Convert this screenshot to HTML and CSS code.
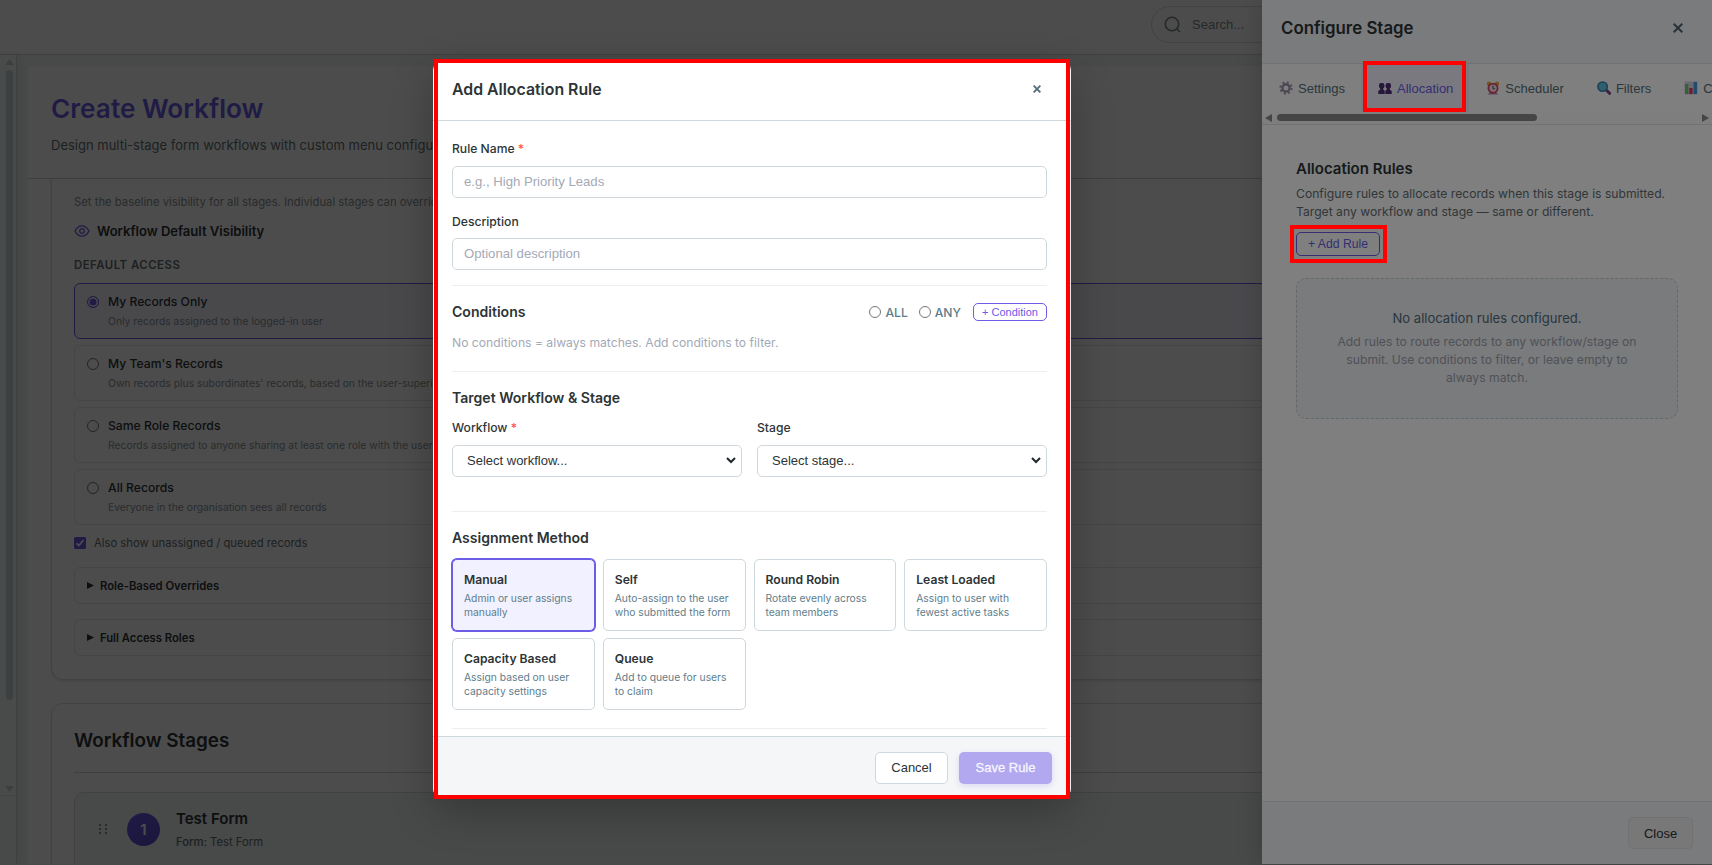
FILE: index.html
```
<!DOCTYPE html>
<html lang="en">
<head>
  <meta charset="UTF-8" />
  <meta name="viewport" content="width=device-width, initial-scale=1.0"/>
  <title>Create Workflow</title>
  <link rel="stylesheet" href="styles.css">
</head>
<body>
  <div class="app">
    <header class="topbar">
      <div class="search">
        <svg width="18" height="18" viewBox="0 0 18 18" fill="none" stroke="#7d888c" stroke-width="1.6"><circle cx="8" cy="8" r="6.7"/><path d="M13 13l3 3"/></svg>
        <span>Search...</span>
      </div>
    </header>
    <div class="shell">
      <aside class="sidebar">
        <div class="side-scroll">
          <i class="arrow-up"></i>
          <div class="side-thumb"></div>
          <i class="arrow-down"></i>
        </div>
        <div class="side-foot"></div>
      </aside>
      <main class="content">
        <div class="page-head">
          <h1>Create Workflow</h1>
          <p>Design multi-stage form workflows with custom menu configurations</p>
        </div>
        <div class="page-body">
          <section class="card visibility">
            <p class="hint">Set the baseline visibility for all stages. Individual stages can override this setting.</p>
            <h3>
              <svg width="16" height="14" viewBox="0 0 16 14" fill="none" stroke="#6c5ce7" stroke-width="1.3"><path d="M1 7C2.6 3.700 5 1.800 8 1.800S13.400 3.700 15 7C13.400 10.300 11 12.200 8 12.200S2.600 10.300 1 7z"/><circle cx="8" cy="7" r="2.300"/></svg>
              Workflow Default Visibility
            </h3>
            <h4>DEFAULT ACCESS</h4>
            <div class="options">
              <div class="option selected"><i class="radio on"></i><div><b>My Records Only</b><span>Only records assigned to the logged-in user</span></div></div>
              <div class="option"><i class="radio"></i><div><b>My Team's Records</b><span>Own records plus subordinates' records, based on the user-superior mapping</span></div></div>
              <div class="option"><i class="radio"></i><div><b>Same Role Records</b><span>Records assigned to anyone sharing at least one role with the user</span></div></div>
              <div class="option"><i class="radio"></i><div><b>All Records</b><span>Everyone in the organisation sees all records</span></div></div>
            </div>
            <div class="check-row">
              <svg width="12" height="12" viewBox="0 0 12 12"><rect width="12" height="12" rx="1.500" fill="#6c5ce7"/><path d="M2.500 6.300l2.400 2.300 4.600-5.600" fill="none" stroke="#fff" stroke-width="1.700"/></svg>
              Also show unassigned / queued records
            </div>
            <div class="fold"><i></i>Role-Based Overrides</div>
            <div class="fold"><i></i>Full Access Roles</div>
          </section>
          <section class="card stages">
            <h2>Workflow Stages</h2>
            <div class="stage">
              <svg class="grip" width="9" height="11" viewBox="0 0 9 11" fill="#8a9599"><path d="M0 0h2v2H0zM6 0h2v2H6zM0 4h2v2H0zM6 4h2v2H6zM0 8h2v2H0zM6 8h2v2H6z"/></svg>
              <div class="num">1</div>
              <div class="stage-text"><b>Test Form</b><span><em>Form:</em> Test Form</span></div>
            </div>
          </section>
        </div>
      </main>
    </div>
  </div>
  <div class="shade shade-page"></div>

  <div class="drawer">
    <div class="drawer-head">
      <h2>Configure Stage</h2>
      <svg width="10" height="10" viewBox="0 0 10 10" stroke="#4f6470" stroke-width="2"><path d="M.7.700l8.600 8.600M9.300.7L.7 9.300"/></svg>
    </div>
    <div class="tabs">
      <div class="tab">
        <svg width="14" height="14" viewBox="0 0 14 14"><circle cx="7" cy="7" r="5.600" fill="none" stroke="#a79bb5" stroke-width="2.200" stroke-dasharray="2.200"/><circle cx="7" cy="7" r="3.600" fill="none" stroke="#94879f" stroke-width="2.200"/></svg>
        Settings
      </div>
      <div class="tab active">
        <svg width="14" height="12" viewBox="0 0 14 12" fill="#4d2f77"><rect x="1" y="1" width="5.400" height="5.400" rx="2"/><rect x="7.600" y="1" width="5.400" height="5.400" rx="2"/><path d="M2.200 5h3v2.500l1.500 1.300V12H.3V9l1.900-1.500zM8.800 5h3v2.500L13.700 9v3H7.300V8.800l1.500-1.300z"/></svg>
        Allocation
      </div>
      <div class="tab">
        <svg width="14" height="14" viewBox="0 0 14 14"><path d="M2 13.500l2-3h6l2 3z" fill="#b391b5"/><circle cx="3" cy="2.800" r="2.200" fill="#e8a83c"/><circle cx="11" cy="2.800" r="2.200" fill="#e8a83c"/><circle cx="7" cy="7.200" r="4.600" fill="#ece0ec" stroke="#d8415c" stroke-width="1.800"/><path d="M7 4.500v3.200h1.800" fill="none" stroke="#514061" stroke-width="1"/></svg>
        Scheduler
      </div>
      <div class="tab">
        <svg width="14" height="14" viewBox="0 0 14 14"><path d="M8.700 8.500l4 3.800" stroke="#7b4384" stroke-width="3" stroke-linecap="round"/><circle cx="5.600" cy="5.600" r="4.700" fill="#5fc1dc" stroke="#347fa8" stroke-width="1.500"/></svg>
        Filters
      </div>
      <div class="tab">
        <svg width="14" height="14" viewBox="0 0 14 14"><rect x=".5" y=".5" width="13" height="13" fill="#d9d2e2"/><path d="M1 3h3.300v10H1z" fill="#70c06c"/><path d="M5.300 7h3.300v6H5.300z" fill="#d63a62"/><path d="M9.600 1H13v12H9.600z" fill="#3b9ad4"/></svg>
        Conditions
      </div>
    </div>
    <div class="tab-scroll"><i class="arrow-left"></i><div class="tab-thumb"></div><i class="arrow-right"></i></div>
    <div class="drawer-body">
      <h3>Allocation Rules</h3>
      <p>Configure rules to allocate records when this stage is submitted.<br>Target any workflow and stage — same or different.</p>
      <button class="outline-btn add-rule">+ Add Rule</button>
      <div class="empty">
        <b>No allocation rules configured.</b>
        <span>Add rules to route records to any workflow/stage on submit. Use conditions to filter, or leave empty to always match.</span>
      </div>
    </div>
    <div class="drawer-foot"><button class="close-btn">Close</button></div>
  </div>
  <div class="shade shade-drawer"></div>

  <div class="modal">
    <div class="modal-head">
      <h2>Add Allocation Rule</h2>
      <svg width="8" height="8" viewBox="0 0 8 8" stroke="#546e7a" stroke-width="1.900"><path d="M.6.600l6.800 6.800M7.400.6L.6 7.400"/></svg>
    </div>
    <div class="modal-body">
      <label>Rule Name <i>*</i></label>
      <input type="text" placeholder="e.g., High Priority Leads">
      <label class="next">Description</label>
      <input type="text" placeholder="Optional description">
      <section class="conditions">
        <div class="cond-head">
          <h3>Conditions</h3>
          <div class="match"><i class="radio"></i>ALL<i class="radio any"></i>ANY<button class="outline-btn cond-btn">+ Condition</button></div>
        </div>
        <p>No conditions = always matches. Add conditions to filter.</p>
      </section>
      <section class="target">
        <h3>Target Workflow &amp; Stage</h3>
        <div class="target-grid">
          <div>
            <label>Workflow <i>*</i></label>
            <div class="select">Select workflow...<svg width="10" height="7" viewBox="0 0 10 7" fill="none" stroke="#20282b" stroke-width="2"><path d="M1 1l4 4 4-4"/></svg></div>
          </div>
          <div>
            <label>Stage</label>
            <div class="select">Select stage...<svg width="10" height="7" viewBox="0 0 10 7" fill="none" stroke="#20282b" stroke-width="2"><path d="M1 1l4 4 4-4"/></svg></div>
          </div>
        </div>
      </section>
      <section class="assign">
        <h3>Assignment Method</h3>
        <div class="methods">
          <div class="method picked"><b>Manual</b><span>Admin or user assigns manually</span></div>
          <div class="method"><b>Self</b><span>Auto-assign to the user who submitted the form</span></div>
          <div class="method"><b>Round Robin</b><span>Rotate evenly across team members</span></div>
          <div class="method"><b>Least Loaded</b><span>Assign to user with fewest active tasks</span></div>
          <div class="method"><b>Capacity Based</b><span>Assign based on user capacity settings</span></div>
          <div class="method"><b>Queue</b><span>Add to queue for users to claim</span></div>
        </div>
      </section>
      <section></section>
    </div>
    <div class="modal-foot">
      <button class="cancel">Cancel</button>
      <button class="save">Save Rule</button>
    </div>
  </div>

  <div class="mark mark-modal"></div>
  <div class="mark mark-tab"></div>
  <div class="mark mark-add"></div>
</body>
</html>
```
FILE: styles.css
```
* {
  margin: 0;
  padding: 0;
  box-sizing: border-box;
}
body {
  width: 1712px;
  height: 865px;
  overflow: hidden;
  position: relative;
  font-family: Inter, sans-serif;
  color: #2d3436;
  background: #f0f4f4;
}
button, input, .select, .search, .tab {
  font-family: "Liberation Sans", sans-serif;
  font-size: 13px;
}
i, em {
  font-style: normal;
}
.app {
  height: 864px;
  display: flex;
  flex-direction: column;
  overflow: hidden;
}
.topbar {
  height: 55px;
  flex: none;
  background: #fff;
  border-bottom: 1px solid #d0dadb;
  padding: 6px 0 0 1151px;
}
.search {
  width: 300px;
  height: 37px;
  border: 1px solid #d5dddf;
  border-radius: 19px;
  padding-left: 12px;
  display: flex;
  align-items: center;
  gap: 10px;
  color: #7f8a8e;
}
.shell {
  flex: 1;
  min-height: 0;
  display: flex;
}
.sidebar {
  width: 17px;
  flex: none;
  background: #f6f8f8;
  border-right: 1px solid #cfd8da;
  box-shadow: 2px 0 8px rgba(0, 0, 0, .08);
  display: flex;
  flex-direction: column;
}
.side-scroll {
  height: 740px;
  padding: 4px 0 0 5px;
  display: flex;
  flex-direction: column;
}
.side-thumb {
  width: 7px;
  height: 630px;
  margin: 5px 0 0 1px;
  border-radius: 4px;
  background: #ccd6d9;
}
.arrow-up, .arrow-down {
  width: 9px;
  height: 6px;
  background: #c8d2d5;
  clip-path: polygon(50% 0, 100% 100%, 0 100%);
}
.arrow-down {
  margin-top: 86px;
  transform: rotate(180deg);
}
.side-foot {
  flex: 1;
  background: #f0f4f4;
  border-top: 1px solid #dfe6e9;
}
.content {
  flex: 1;
  padding: 11px 0 0 11px;
  display: flex;
  flex-direction: column;
}
.page-head {
  height: 113px;
  flex: none;
  background: #fff;
  border-bottom: 1px solid #cbd5d8;
  padding: 26px 23px 0;
}
.page-head h1 {
  font-size: 26.200px;
  line-height: 34px;
  font-weight: 600;
  color: #6c5ce7;
}
.page-head p {
  margin-top: 8px;
  font-size: 13px;
  line-height: 22px;
  color: #636e72;
}
.page-body {
  flex: 1;
  background: #fff;
  padding: 0 23px;
}
.card {
  border: 1px solid #d9dee0;
  border-radius: 12px;
  padding: 0 22px;
  box-shadow: 0 1px 3px rgba(0, 0, 0, .12);
}
.visibility {
  height: 501px;
  border-top: none;
  border-radius: 0 0 12px 12px;
  padding-top: 14px;
}
.hint {
  font-size: 11.300px;
  line-height: 18px;
  color: #8b9296;
}
.visibility h3 {
  margin-top: 10px;
  display: flex;
  align-items: center;
  gap: 7px;
  font-size: 13.050px;
  line-height: 20px;
  font-weight: 600;
}
.visibility h4 {
  margin-top: 16px;
  font-size: 11.400px;
  line-height: 16px;
  font-weight: 600;
  letter-spacing: .5px;
  color: #636e72;
}
.options {
  margin-top: 10px;
  display: flex;
  flex-direction: column;
  gap: 6px;
}
.option {
  height: 56px;
  border: 1px solid #e4e7e9;
  border-radius: 6px;
  padding: 9px 12px;
  display: flex;
  gap: 9px;
}
.option.selected {
  border-color: #6c5ce7;
  background: #f5f4ff;
}
.option b {
  display: block;
  font-size: 12.200px;
  line-height: 18px;
  font-weight: 500;
}
.option span {
  display: block;
  margin-top: 2px;
  font-size: 10.350px;
  line-height: 16px;
  color: #8b9499;
}
.radio {
  width: 12px;
  height: 12px;
  flex: none;
  border: 1px solid #767676;
  border-radius: 50%;
  background: #fff;
}
.option .radio {
  margin-top: 3px;
}
.radio.on {
  border: 1px solid #6c5ce7;
  background: #6c5ce7;
  box-shadow: inset 0 0 0 1.500px #fff;
}
.check-row {
  margin-top: 9px;
  height: 18px;
  display: flex;
  align-items: center;
  gap: 8px;
  font-size: 11.250px;
  color: #636e72;
}
.fold {
  height: 37px;
  margin-top: 15px;
  border: 1px solid #e4e7e9;
  border-radius: 6px;
  padding-left: 12px;
  display: flex;
  align-items: center;
  gap: 6px;
  font-size: 11.250px;
  font-weight: 600;
}
.fold i {
  width: 7px;
  height: 7px;
  background: #2d3436;
  clip-path: polygon(0 0, 100% 50%, 0 100%);
}
.stages {
  height: 220px;
  margin-top: 23px;
}
.stages h2 {
  height: 69px;
  border-bottom: 1px solid #cbd5d8;
  padding-top: 24px;
  font-size: 18.850px;
  line-height: 26px;
  font-weight: 600;
}
.stage {
  height: 110px;
  margin-top: 19px;
  border: 1px solid #d5dcde;
  border-radius: 10px;
  background: #f1f5f3;
  display: flex;
  padding: 16px 24px;
}
.grip {
  margin-top: 15px;
}
.num {
  width: 33px;
  height: 33px;
  margin: 4px 16px 0 19px;
  border-radius: 50%;
  background: linear-gradient(135deg, #6c5ce7, #5548c8);
  color: #fff;
  font-size: 15px;
  line-height: 33px;
  font-weight: 600;
  text-align: center;
}
.stage-text b {
  display: block;
  font-size: 15px;
  line-height: 20px;
  font-weight: 600;
}
.stage-text span {
  display: block;
  margin-top: 4px;
  font-size: 11.250px;
  line-height: 18px;
  color: #636e72;
}
.stage-text em {
  font-weight: 500;
}

/* overlays */
.shade {
  position: absolute;
  inset: 0;
}
.shade-page {
  background: rgba(0, 0, 0, .4);
}
.shade-drawer {
  background: rgba(0, 0, 0, .5);
}

/* drawer */
.drawer {
  position: absolute;
  top: 0;
  right: 0;
  width: 450px;
  height: 864px;
  background: #fff;
  display: flex;
  flex-direction: column;
  box-shadow: -4px 0 20px rgba(0, 0, 0, .15);
}
.drawer-head {
  height: 64px;
  flex: none;
  padding: 0 29px 8px 19px;
  background: #f5f6fa;
  border-bottom: 1px solid #dfe6e9;
  display: flex;
  align-items: center;
  justify-content: space-between;
}
.drawer-head h2 {
  font-size: 16.850px;
  font-weight: 600;
}
.tabs {
  height: 48px;
  flex: none;
  display: flex;
  overflow: hidden;
}
.tab {
  flex: none;
  display: flex;
  align-items: center;
  gap: 5px;
  padding: 0 16px 0 17px;
  color: #546e7a;
}
.tab.active {
  background: #f5f3ff;
  color: #6c5ce7;
}
.tab-scroll {
  height: 13px;
  flex: none;
  border-bottom: 1px solid #dfe6e9;
  background: #fcfcfc;
  display: flex;
  align-items: flex-start;
  padding: 2px 3px 0;
}
.tab-thumb {
  width: 260px;
  height: 7px;
  margin: 0 165px 0 5px;
  border-radius: 4px;
  background: #8b8b8b;
}
.arrow-left, .arrow-right {
  width: 7px;
  height: 8px;
  background: #8b8b8b;
  clip-path: polygon(0 50%, 100% 0, 100% 100%);
}
.arrow-right {
  transform: rotate(180deg);
}
.drawer-body {
  flex: 1;
  padding: 34px;
}
.drawer-body h3 {
  font-size: 15px;
  line-height: 20px;
  font-weight: 600;
}
.drawer-body p {
  margin-top: 6px;
  font-size: 12.170px;
  line-height: 18px;
  color: #636e72;
  white-space: nowrap;
}
.outline-btn {
  border: 1px solid #6c5ce7;
  border-radius: 5px;
  background: #fff;
  color: #6c5ce7;
}
.add-rule {
  display: block;
  width: 84px;
  height: 24px;
  margin-top: 11px;
  font-size: 12.200px;
}
.empty {
  height: 141px;
  margin-top: 22px;
  border: 1px dashed #c5d0d4;
  border-radius: 10px;
  background: #f5f6fa;
  padding: 28px 36px 0;
  text-align: center;
}
.empty b {
  display: block;
  font-size: 13.050px;
  line-height: 22px;
  font-weight: 400;
  color: #546e7a;
}
.empty span {
  display: block;
  margin-top: 4px;
  font-size: 12.170px;
  line-height: 18px;
  color: #a0a5b0;
}
.drawer-foot {
  height: 63px;
  flex: none;
  border-top: 1px solid #dfe6e9;
  background: #f5f6fa;
  padding: 15px 19px 0;
  display: flex;
  justify-content: flex-end;
}
.close-btn {
  width: 65px;
  height: 32px;
  border: 1px solid #dfe3e6;
  border-radius: 5px;
  background: #f0f1f3;
  color: #2d3436;
}

/* modal */
.modal {
  position: absolute;
  left: 433px;
  top: 60px;
  width: 638px;
  height: 738px;
  border-radius: 10px;
  background: #fff;
  overflow: hidden;
  box-shadow: 0 14px 40px rgba(0, 0, 0, .25);
  display: flex;
  flex-direction: column;
}
.modal-head {
  height: 61px;
  flex: none;
  border-bottom: 1px solid #cfd8dc;
  padding: 0 30px 2px 19px;
  display: flex;
  align-items: center;
  justify-content: space-between;
}
.modal-head h2 {
  font-size: 15.850px;
  font-weight: 600;
}
.modal-body {
  height: 615px;
  flex: none;
  padding: 19px 19px 0;
  border-right: 5px solid #e9ebee;
}
.modal label {
  display: block;
  font-size: 12.150px;
  line-height: 18px;
  font-weight: 500;
}
.modal label i {
  color: #ff5252;
}
.modal label.next {
  margin-top: 15px;
  margin-bottom: -1px;
}
.modal input, .select {
  display: block;
  width: 100%;
  height: 32px;
  margin-top: 8px;
  border: 1px solid #cfd8dc;
  border-radius: 5px;
  padding: 0 11px 2px;
  background: #fff;
  color: #2d3436;
}
.modal input {
  font-size: 13.150px;
}
.modal input::placeholder {
  color: #a4a9b6;
}
.modal section {
  border-top: 1px solid #eceff1;
}
.modal h3 {
  font-size: 14.050px;
  line-height: 20px;
  font-weight: 600;
}
.conditions {
  height: 86px;
  margin-top: 15px;
  padding-top: 16px;
}
.cond-head, .match {
  display: flex;
  align-items: center;
}
.cond-head {
  justify-content: space-between;
}
.match {
  font-size: 12.150px;
  font-weight: 500;
  color: #607d8b;
}
.match .radio {
  margin-right: 4px;
}
.match .any {
  margin-left: 11px;
}
.cond-btn {
  width: 74px;
  height: 18px;
  margin-left: 12px;
  font-size: 11px;
}
.conditions p {
  margin-top: 12px;
  font-size: 12.170px;
  line-height: 18px;
  color: #a4a9b6;
}
.target {
  height: 140px;
  padding-top: 16px;
}
.target-grid {
  margin-top: 11px;
  display: grid;
  grid-template-columns: 1fr 1fr;
  gap: 15px;
}
.select {
  display: flex;
  align-items: center;
  justify-content: space-between;
  padding: 0 5px 1px 14px;
}
.assign {
  height: 217px;
  padding-top: 16px;
}
.methods {
  margin-top: 11px;
  display: grid;
  grid-template-columns: repeat(4, 1fr);
  gap: 7px 8px;
}
.method {
  height: 72px;
  border: 1px solid #cfd8dc;
  border-radius: 5px;
  padding: 11px;
}
.method.picked {
  border-color: #6c5ce7;
  background: #f2f1ff;
  box-shadow: 0 0 0 1px #6c5ce7;
}
.method b {
  display: block;
  font-size: 12.150px;
  line-height: 18px;
  font-weight: 600;
}
.method span {
  display: block;
  margin-top: 2px;
  font-size: 10.300px;
  line-height: 14px;
  color: #607d8b;
}
.modal-foot {
  flex: 1;
  border-top: 1px solid #cfd8dc;
  background: #f5f6f8;
  padding: 15px 19px 0;
  display: flex;
  justify-content: flex-end;
  gap: 11px;
}
.modal-foot button {
  height: 32px;
  border-radius: 5px;
  padding-bottom: 2px;
}
.cancel {
  width: 73px;
  border: 1px solid #cfd8dc;
  background: #fff;
  color: #2d3436;
}
.save {
  width: 93px;
  border: none;
  background: #b1a8f0;
  color: #f7f5ff;
  -webkit-text-stroke: .3px #f7f5ff;
  box-shadow: 0 2px 6px rgba(108, 92, 231, .2);
}

/* highlight frames */
.mark {
  position: absolute;
  border: 4px solid #f00;
}
.mark-modal {
  left: 434px;
  top: 59px;
  width: 636px;
  height: 740px;
}
.mark-tab {
  left: 1363px;
  top: 61px;
  width: 103px;
  height: 51px;
}
.mark-add {
  left: 1290px;
  top: 225px;
  width: 97px;
  height: 38px;
}
```
